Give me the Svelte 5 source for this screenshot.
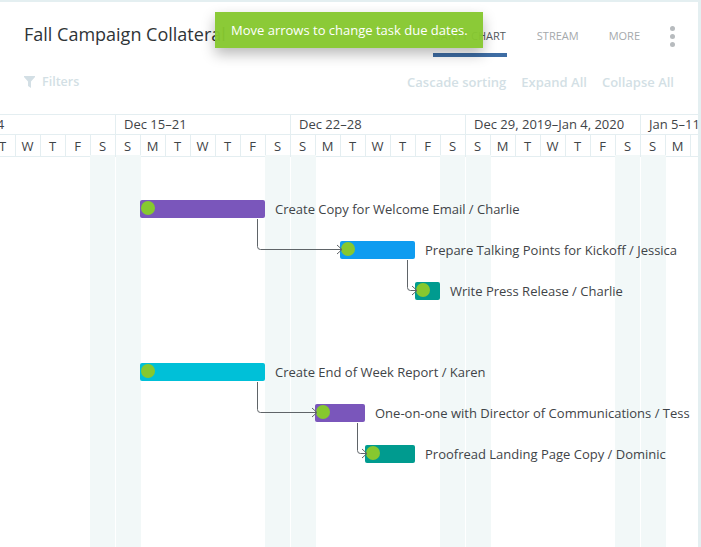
<script>
  const weeks = ['Dec 8–14', 'Dec 15–21', 'Dec 22–28', 'Dec 29, 2019–Jan 4, 2020', 'Jan 5–11'];
  const letters = ['T','W','T','F','S','S','M','T','W','T','F','S','S','M','T','W','T','F','S','S','M','T','W','T','F','S','S','M'];
  const days = letters.map((l, i) => ({ l, i }));
  const shaded = [90, 116, 265, 291, 440, 466, 615, 641];
  const tasks = [
    { x: 140, y: 200, w: 125, c: '#7a56bb', t: 'Create Copy for Welcome Email / Charlie' },
    { x: 340, y: 241, w: 75, c: '#0f9cf0', t: 'Prepare Talking Points for Kickoff / Jessica' },
    { x: 415, y: 282, w: 25, c: '#009b8f', t: 'Write Press Release / Charlie' },
    { x: 140, y: 363, w: 125, c: '#00c0d8', t: 'Create End of Week Report / Karen' },
    { x: 315, y: 404, w: 50, c: '#7a56bb', t: 'One-on-one with Director of Communications / Tess' },
    { x: 365, y: 445, w: 50, c: '#009b8f', t: 'Proofread Landing Page Copy / Dominic' }
  ];
  const links = [
    { x1: 257, y1: 219, x2: 342, y2: 249.5 },
    { x1: 407, y1: 260, x2: 417, y2: 290.5 },
    { x1: 257, y1: 382, x2: 317, y2: 412.5 },
    { x1: 357, y1: 423, x2: 367, y2: 453.5 }
  ];
</script>

<div class="app">
  <header class="head">
    <h1>Fall Campaign Collateral</h1>
    <nav class="tabs">
      <span class="tab active">GANTT CHART</span>
      <span class="tab">STREAM</span>
      <span class="tab">MORE</span>
      <span class="dots"><i></i><i></i><i></i></span>
    </nav>
  </header>

  <div class="tools">
    <span class="filters">
      <svg width="11" height="12" viewBox="0 0 11 12"><path d="M0 0h11v1L7 5.4V12L4 10V5.4L0 1z" fill="#d3dfe5"/></svg>
      Filters
    </span>
    <span class="actions">
      <span>Cascade sorting</span>
      <span>Expand All</span>
      <span>Collapse All</span>
    </span>
  </div>

  <div class="timeline">
    <div class="weeks">
      {#each weeks as w}
        <div class="week">{w}</div>
      {/each}
    </div>
    <div class="days">
      {#each days as d}
        <div class="day">{d.l}</div>
      {/each}
    </div>
  </div>

  <div class="chart">
    {#each shaded as x}
      <div class="shade" style="left:{x}px"></div>
    {/each}
    {#each tasks as t}
      <div class="task" style="left:{t.x}px;top:{t.y - 155}px">
        <div class="bar" style="width:{t.w}px;background:{t.c}"><span class="knob"></span></div>
        <span class="label">{t.t}</span>
      </div>
    {/each}
    <svg class="links" width="701" height="392" viewBox="0 155 701 392">
      {#each links as l}
        <path d="M{l.x1 + 0.5} {l.y1}V{l.y2 - 3}q0 3 3 3H{l.x2}" fill="none" stroke="#5f6468" stroke-width="1"/>
        <path d="M{l.x2 - 5} {l.y2 - 4.5}L{l.x2} {l.y2}L{l.x2 - 5} {l.y2 + 4.5}" fill="none" stroke="#5f6468" stroke-width="1"/>
      {/each}
    </svg>
  </div>

  <div class="toast">Move arrows to change task due dates.</div>
</div>

<style>
  :global(body) { margin: 0; background: #fff; }
  .app {
    position: relative;
    width: 701px;
    height: 547px;
    overflow: hidden;
    box-sizing: border-box;
    border-top: 2px solid #e4eff1;
    border-right: 3px solid #e4eff1;
    font-family: "Open Sans", sans-serif;
    color: #3f4448;
  }
  .head {
    display: flex;
    justify-content: space-between;
    height: 55px;
  }
  h1 {
    margin: 18px 0 0 24px;
    font-size: 18px;
    line-height: 28px;
    font-weight: 400;
    color: #2f3437;
  }
  .tabs { display: flex; margin-right: 23px; align-items: flex-start; }
  .tab {
    font-size: 11px;
    line-height: 16px;
    padding: 26px 0 9px;
    color: #a5a9ac;
    margin-left: 30px;
  }
  .tab.active {
    color: #54595c;
    border-bottom: 4px solid #3e6da4;
    width: 74px;
    white-space: nowrap;
  }
  .dots {
    display: flex;
    flex-direction: column;
    gap: 3px;
    margin: 24px 0 0 30px;
  }
  .dots i { width: 5px; height: 5px; border-radius: 50%; background: #b7bbbe; }
  .tools {
    display: flex;
    justify-content: space-between;
    height: 57px;
    font-size: 13px;
    font-weight: 600;
    color: #d3dfe5;
  }
  .filters { display: flex; gap: 7px; align-items: flex-start; margin: 17px 0 0 24px; line-height: 16px; font-size: 12.5px; }
  .filters svg { margin-top: 2px; }
  .actions { display: flex; gap: 15px; margin: 17px 24px 0 0; line-height: 16px; }
  .timeline { height: 41px; }
  .weeks { display: flex; height: 19px; border-top: 1px solid #e4eef1; border-bottom: 1px solid #e4eef1; margin-left: -59px; }
  .week {
    flex: none;
    width: 175px;
    box-sizing: border-box;
    border-right: 1px solid #e4eef1;
    font-size: 13px;
    line-height: 19px;
    padding-left: 8px;
    white-space: nowrap;
  }
  .days { display: flex; height: 21px; border-bottom: 1px solid #e4eef1; margin-left: -9px; }
  .day {
    flex: none;
    width: 25px;
    box-sizing: border-box;
    border-right: 1px solid #e4eef1;
    padding-right: 1px;
    font-size: 13px;
    line-height: 22px;
    text-align: center;
  }
  .chart { position: relative; height: 392px; }
  .shade { position: absolute; top: 0; bottom: 0; width: 25px; background: #f2f8f8; }
  .links { position: absolute; left: 0; top: 0; }
  .task { position: absolute; display: flex; align-items: center; height: 18px; }
  .bar { position: relative; height: 18px; border-radius: 2px; flex: none; }
  .knob {
    position: absolute;
    left: 1px;
    top: 1px;
    width: 14px;
    height: 14px;
    border-radius: 50%;
    background: #86c82f;
  }
  .label { margin-left: 10px; font-size: 13px; white-space: nowrap; }
  .toast {
    position: absolute;
    left: 215px;
    top: 10px;
    width: 268px;
    height: 36px;
    box-sizing: border-box;
    padding-left: 16px;
    background: rgba(134, 200, 47, 0.96);
    color: #fff;
    font-size: 13px;
    line-height: 36px;
    box-shadow: 0 6px 14px rgba(0, 0, 0, 0.28);
  }
</style>
